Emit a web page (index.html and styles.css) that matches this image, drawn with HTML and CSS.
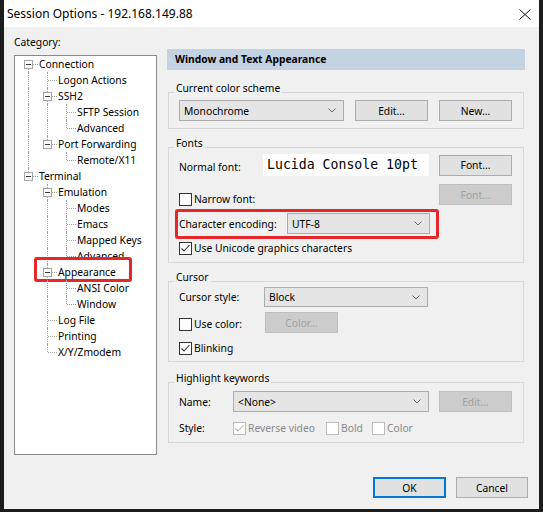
FILE: index.html
```html
<!DOCTYPE html>
<html>
<head>
<meta charset="utf-8">
<link rel="stylesheet" href="styles.css">
</head>
<body>
<div class="screen">
<div class="win">
  <div class="titlebar">
    <span class="title">Session Options - 192.168.149.88</span>
    <svg class="close" width="12" height="11" viewBox="0 0 12 11"><path d="M0.5 0.5 L11.5 10.5 M11.5 0.5 L0.5 10.5" stroke="#111" stroke-width="1" fill="none"/></svg>
  </div>
  <div class="main">
    <div class="left">
      <div class="cat">Category:</div>
      <div class="tree">
        <div class="row"><span class="g f"><i class="box"></i></span><span class="tx">Connection</span></div>
        <div class="row"><span class="g v"></span><span class="g t"></span><span class="tx">Logon Actions</span></div>
        <div class="row"><span class="g v"></span><span class="g t"><i class="box"></i></span><span class="tx">SSH2</span></div>
        <div class="row"><span class="g v"></span><span class="g v"></span><span class="g t"></span><span class="tx">SFTP Session</span></div>
        <div class="row"><span class="g v"></span><span class="g v"></span><span class="g l"></span><span class="tx">Advanced</span></div>
        <div class="row"><span class="g v"></span><span class="g l"><i class="box"></i></span><span class="tx">Port Forwarding</span></div>
        <div class="row"><span class="g v"></span><span class="g e"></span><span class="g l"></span><span class="tx">Remote/X11</span></div>
        <div class="row"><span class="g l"><i class="box"></i></span><span class="tx">Terminal</span></div>
        <div class="row"><span class="g e"></span><span class="g t"><i class="box"></i></span><span class="tx">Emulation</span></div>
        <div class="row"><span class="g e"></span><span class="g v"></span><span class="g t"></span><span class="tx">Modes</span></div>
        <div class="row"><span class="g e"></span><span class="g v"></span><span class="g t"></span><span class="tx">Emacs</span></div>
        <div class="row"><span class="g e"></span><span class="g v"></span><span class="g t"></span><span class="tx">Mapped Keys</span></div>
        <div class="row"><span class="g e"></span><span class="g v"></span><span class="g l"></span><span class="tx">Advanced</span></div>
        <div class="row mark-row"><span class="g e"></span><span class="g t"><i class="box"></i></span><span class="tx">Appearance</span><span class="redmark tree-mark"></span></div>
        <div class="row"><span class="g e"></span><span class="g v"></span><span class="g t"></span><span class="tx">ANSI Color</span></div>
        <div class="row"><span class="g e"></span><span class="g v"></span><span class="g l"></span><span class="tx">Window</span></div>
        <div class="row"><span class="g e"></span><span class="g t"></span><span class="tx">Log File</span></div>
        <div class="row"><span class="g e"></span><span class="g t"></span><span class="tx">Printing</span></div>
        <div class="row"><span class="g e"></span><span class="g l"></span><span class="tx">X/Y/Zmodem</span></div>
      </div>
    </div>

    <div class="right">
      <div class="header">Window and Text Appearance</div>

      <div class="grp g1">
        <div class="gt">Current color scheme</div>
        <div class="r r-scheme">
          <div class="sel sel-scheme"><span>Monochrome</span><svg width="8" height="5" viewBox="0 0 8 5"><path d="M0.5 0.5 L4 4 L7.5 0.5" stroke="#666" fill="none"/></svg></div>
          <div class="btn btn-edit">Edit...</div>
          <div class="btn btn-new">New...</div>
        </div>
      </div>

      <div class="grp g2">
        <div class="gt">Fonts</div>
        <div class="r r-normal">
          <span class="lbl lbl-normal">Normal font:</span>
          <div class="fontbox">Lucida Console 10pt</div>
          <div class="btn btn-right">Font...</div>
        </div>
        <div class="r r-narrow">
          <div class="chk chk-narrow"><span class="cb"></span><span>Narrow font:</span></div>
          <div class="btn btn-right dis">Font...</div>
        </div>
        <div class="r r-enc mark-row">
          <span class="lbl lbl-enc">Character encoding:</span>
          <div class="sel sel-enc"><span>UTF-8</span><svg width="8" height="5" viewBox="0 0 8 5"><path d="M0.5 0.5 L4 4 L7.5 0.5" stroke="#666" fill="none"/></svg></div>
          <span class="redmark enc-mark"></span>
        </div>
        <div class="r r-uni">
          <div class="chk"><span class="cb"><svg width="11" height="11" viewBox="0 0 11 11"><path d="M1.5 5.5 L4 8 L9.5 2" stroke="#333" stroke-width="1.1" fill="none"/></svg></span><span>Use Unicode graphics characters</span></div>
        </div>
      </div>

      <div class="grp g3">
        <div class="gt">Cursor</div>
        <div class="r r-cstyle">
          <span class="lbl lbl-cstyle">Cursor style:</span>
          <div class="sel sel-cstyle"><span>Block</span><svg width="8" height="5" viewBox="0 0 8 5"><path d="M0.5 0.5 L4 4 L7.5 0.5" stroke="#666" fill="none"/></svg></div>
        </div>
        <div class="r r-ucolor">
          <div class="chk chk-ucolor"><span class="cb"></span><span>Use color:</span></div>
          <div class="btn dis">Color...</div>
        </div>
        <div class="r r-blink">
          <div class="chk"><span class="cb"><svg width="11" height="11" viewBox="0 0 11 11"><path d="M1.5 5.5 L4 8 L9.5 2" stroke="#333" stroke-width="1.1" fill="none"/></svg></span><span>Blinking</span></div>
        </div>
      </div>

      <div class="grp g4">
        <div class="gt">Highlight keywords</div>
        <div class="r r-name">
          <span class="lbl lbl-name">Name:</span>
          <div class="sel sel-name"><span>&lt;None&gt;</span><svg width="8" height="5" viewBox="0 0 8 5"><path d="M0.5 0.5 L4 4 L7.5 0.5" stroke="#666" fill="none"/></svg></div>
          <div class="btn btn-right dis">Edit...</div>
        </div>
        <div class="r r-style">
          <span class="lbl lbl-name">Style:</span>
          <div class="chk dchk chk-rev"><span class="cb"><svg width="11" height="11" viewBox="0 0 11 11"><path d="M1.5 5.5 L4 8 L9.5 2" stroke="#b5b5b5" stroke-width="1.1" fill="none"/></svg></span><span>Reverse video</span></div>
          <div class="chk dchk chk-bold"><span class="cb"></span><span>Bold</span></div>
          <div class="chk dchk"><span class="cb"></span><span>Color</span></div>
        </div>
      </div>
    </div>
  </div>

  <div class="footer">
    <div class="btn btn-ok">OK</div>
    <div class="btn btn-cancel">Cancel</div>
  </div>
</div>
</div>
</body>
</html>
```

FILE: styles.css
```css
* { box-sizing: border-box; margin: 0; padding: 0; }
body {
  margin: 0;
  background: #1c1c1c;
  font-family: "Noto Sans", "Open Sans", sans-serif;
  font-size: 10.3px;
  color: #000;
}
.screen {
  width: 543px;
  height: 512px;
  overflow: hidden;
  background: #1c1c1c;
  padding-left: 4px;
}
.win {
  width: 535px;
  height: 509px;
  background: #f0f0f0;
  display: flex;
  flex-direction: column;
}
.titlebar {
  height: 27px;
  flex: none;
  background: #fff;
  display: flex;
  align-items: center;
  justify-content: space-between;
  padding: 0 8px 0 3px;
}
.title { font-size: 12px; line-height: 27px; }
.close { display: block; margin-top: 1px; }

.main { display: flex; gap: 10px; padding-left: 10px; }
.left { width: 143px; padding-top: 8px; flex: none; }
.cat { height: 14px; line-height: 14px; margin-bottom: 6px; }
.tree {
  height: 400px;
  background: #fff;
  border: 1px solid #8a8a8a;
  padding-left: 4px;
}
.row { display: flex; height: 16px; align-items: center; position: relative; }
.tx { margin-left: 1px; line-height: 16px; white-space: nowrap; }
.g { width: 19px; height: 16px; flex: none; position: relative; }
.g.v::before, .g.t::before, .g.l::before, .g.f::before {
  content: "";
  position: absolute;
  left: 9px;
  top: 0;
  bottom: 0;
  border-left: 1px dotted #a0a0a0;
}
.g.l::before { bottom: 8px; }
.g.f::before { top: 8px; }
.g.t::after, .g.l::after, .g.f::after {
  content: "";
  position: absolute;
  left: 10px;
  right: 0;
  top: 8px;
  border-top: 1px dotted #a0a0a0;
}
.box {
  position: absolute;
  left: 5px;
  top: 4px;
  width: 9px;
  height: 9px;
  border: 1px solid #a5a5a5;
  background: #fff;
  z-index: 1;
}
.box::after {
  content: "";
  position: absolute;
  left: 1px;
  top: 3px;
  width: 5px;
  height: 1px;
  background: #3a3a3a;
}
.redmark {
  position: absolute;
  border: 3px solid #e5262b;
  border-radius: 3px;
  pointer-events: none;
}
.tree-mark { left: 15px; top: -7px; width: 98px; height: 25px; }

.right { width: 358px; padding-top: 22px; flex: none; }
.header {
  height: 21px;
  line-height: 21px;
  background: #c4d3e2;
  font-weight: bold;
  padding-left: 8px;
}
.grp {
  margin: 0 1px;
  border: 1px solid #d8d8d8;
  padding: 0 11px 7px 10px;
}
.gt {
  width: max-content;
  margin: -12px 0 0 -5px;
  padding: 0 2px;
  background: #f0f0f0;
  line-height: 14px;
}
.g1 { margin-top: 22px; }
.g2 { margin-top: 18px; }
.g3 { margin-top: 18px; padding-bottom: 6px; }
.g4 { margin-top: 20px; }

.r { display: flex; align-items: center; position: relative; }
.lbl { white-space: nowrap; flex: none; }

.sel {
  height: 21px;
  background: #e5e5e5;
  border: 1px solid #acacac;
  display: flex;
  align-items: center;
  justify-content: space-between;
  padding: 0 7px 0 4px;
  flex: none;
}
.sel svg { display: block; }
.btn {
  height: 21px;
  width: 73px;
  background: #e1e1e1;
  border: 1px solid #adadad;
  display: flex;
  align-items: center;
  justify-content: center;
  flex: none;
}
.btn.dis { background: #cccccc; border-color: #bfbfbf; color: #a0a0a0; }
.btn-right { margin-left: auto; }

.r-scheme { margin-top: 5px; }
.sel-scheme { width: 165px; }
.btn-edit { margin-left: 11px; }
.btn-new { margin-left: 11px; }

.r-normal { margin-top: 4px; height: 22px; }
.lbl-normal { width: 84px; padding-top: 4px; }
.fontbox {
  width: 166px;
  height: 22px;
  background: #fff;
  font-family: "DejaVu Sans Mono", "Liberation Mono", monospace;
  font-size: 13.2px;
  line-height: 22px;
  padding-left: 4px;
  white-space: nowrap;
  flex: none;
}

.chk {
  display: flex;
  align-items: center;
  white-space: nowrap;
  flex: none;
  height: 13px;
  line-height: 13px;
}
.cb {
  width: 13px;
  height: 13px;
  background: #fff;
  border: 1px solid #333;
  margin-right: 2px;
  display: flex;
  align-items: center;
  justify-content: center;
  flex: none;
}
.cb svg { display: block; }
.dchk { color: #8a8a8a; }
.dchk .cb { border-color: #bcbcbc; }

.r-narrow { margin-top: 8px; align-items: flex-start; }
.chk-narrow { margin-top: 9px; }
.r-enc { margin-top: 7px; }
.lbl-enc { width: 108px; }
.sel-enc { width: 143px; }
.enc-mark { left: -4px; top: -4px; width: 264px; height: 30px; }
.r-uni { margin-top: 8px; }

.r-cstyle { margin-top: 3px; }
.sel-cstyle { width: 164px; height: 20px; }
.lbl-cstyle { width: 85px; }
.r-ucolor { margin-top: 5px; align-items: flex-start; }
.chk-ucolor { width: 86px; margin-top: 6px; }
.r-blink { margin-top: 9px; }

.r-name { margin-top: 6px; }
.lbl-name { width: 54px; }
.sel-name { width: 196px; }
.r-style { margin-top: 9px; }
.chk-rev { width: 93px; }
.chk-bold { width: 46px; }

.footer {
  display: flex;
  justify-content: flex-end;
  gap: 10px;
  padding-right: 11px;
  margin-top: 22px;
}
.btn-ok { border: 2px solid #0078d7; }
.btn-cancel { width: 72px; }
```
